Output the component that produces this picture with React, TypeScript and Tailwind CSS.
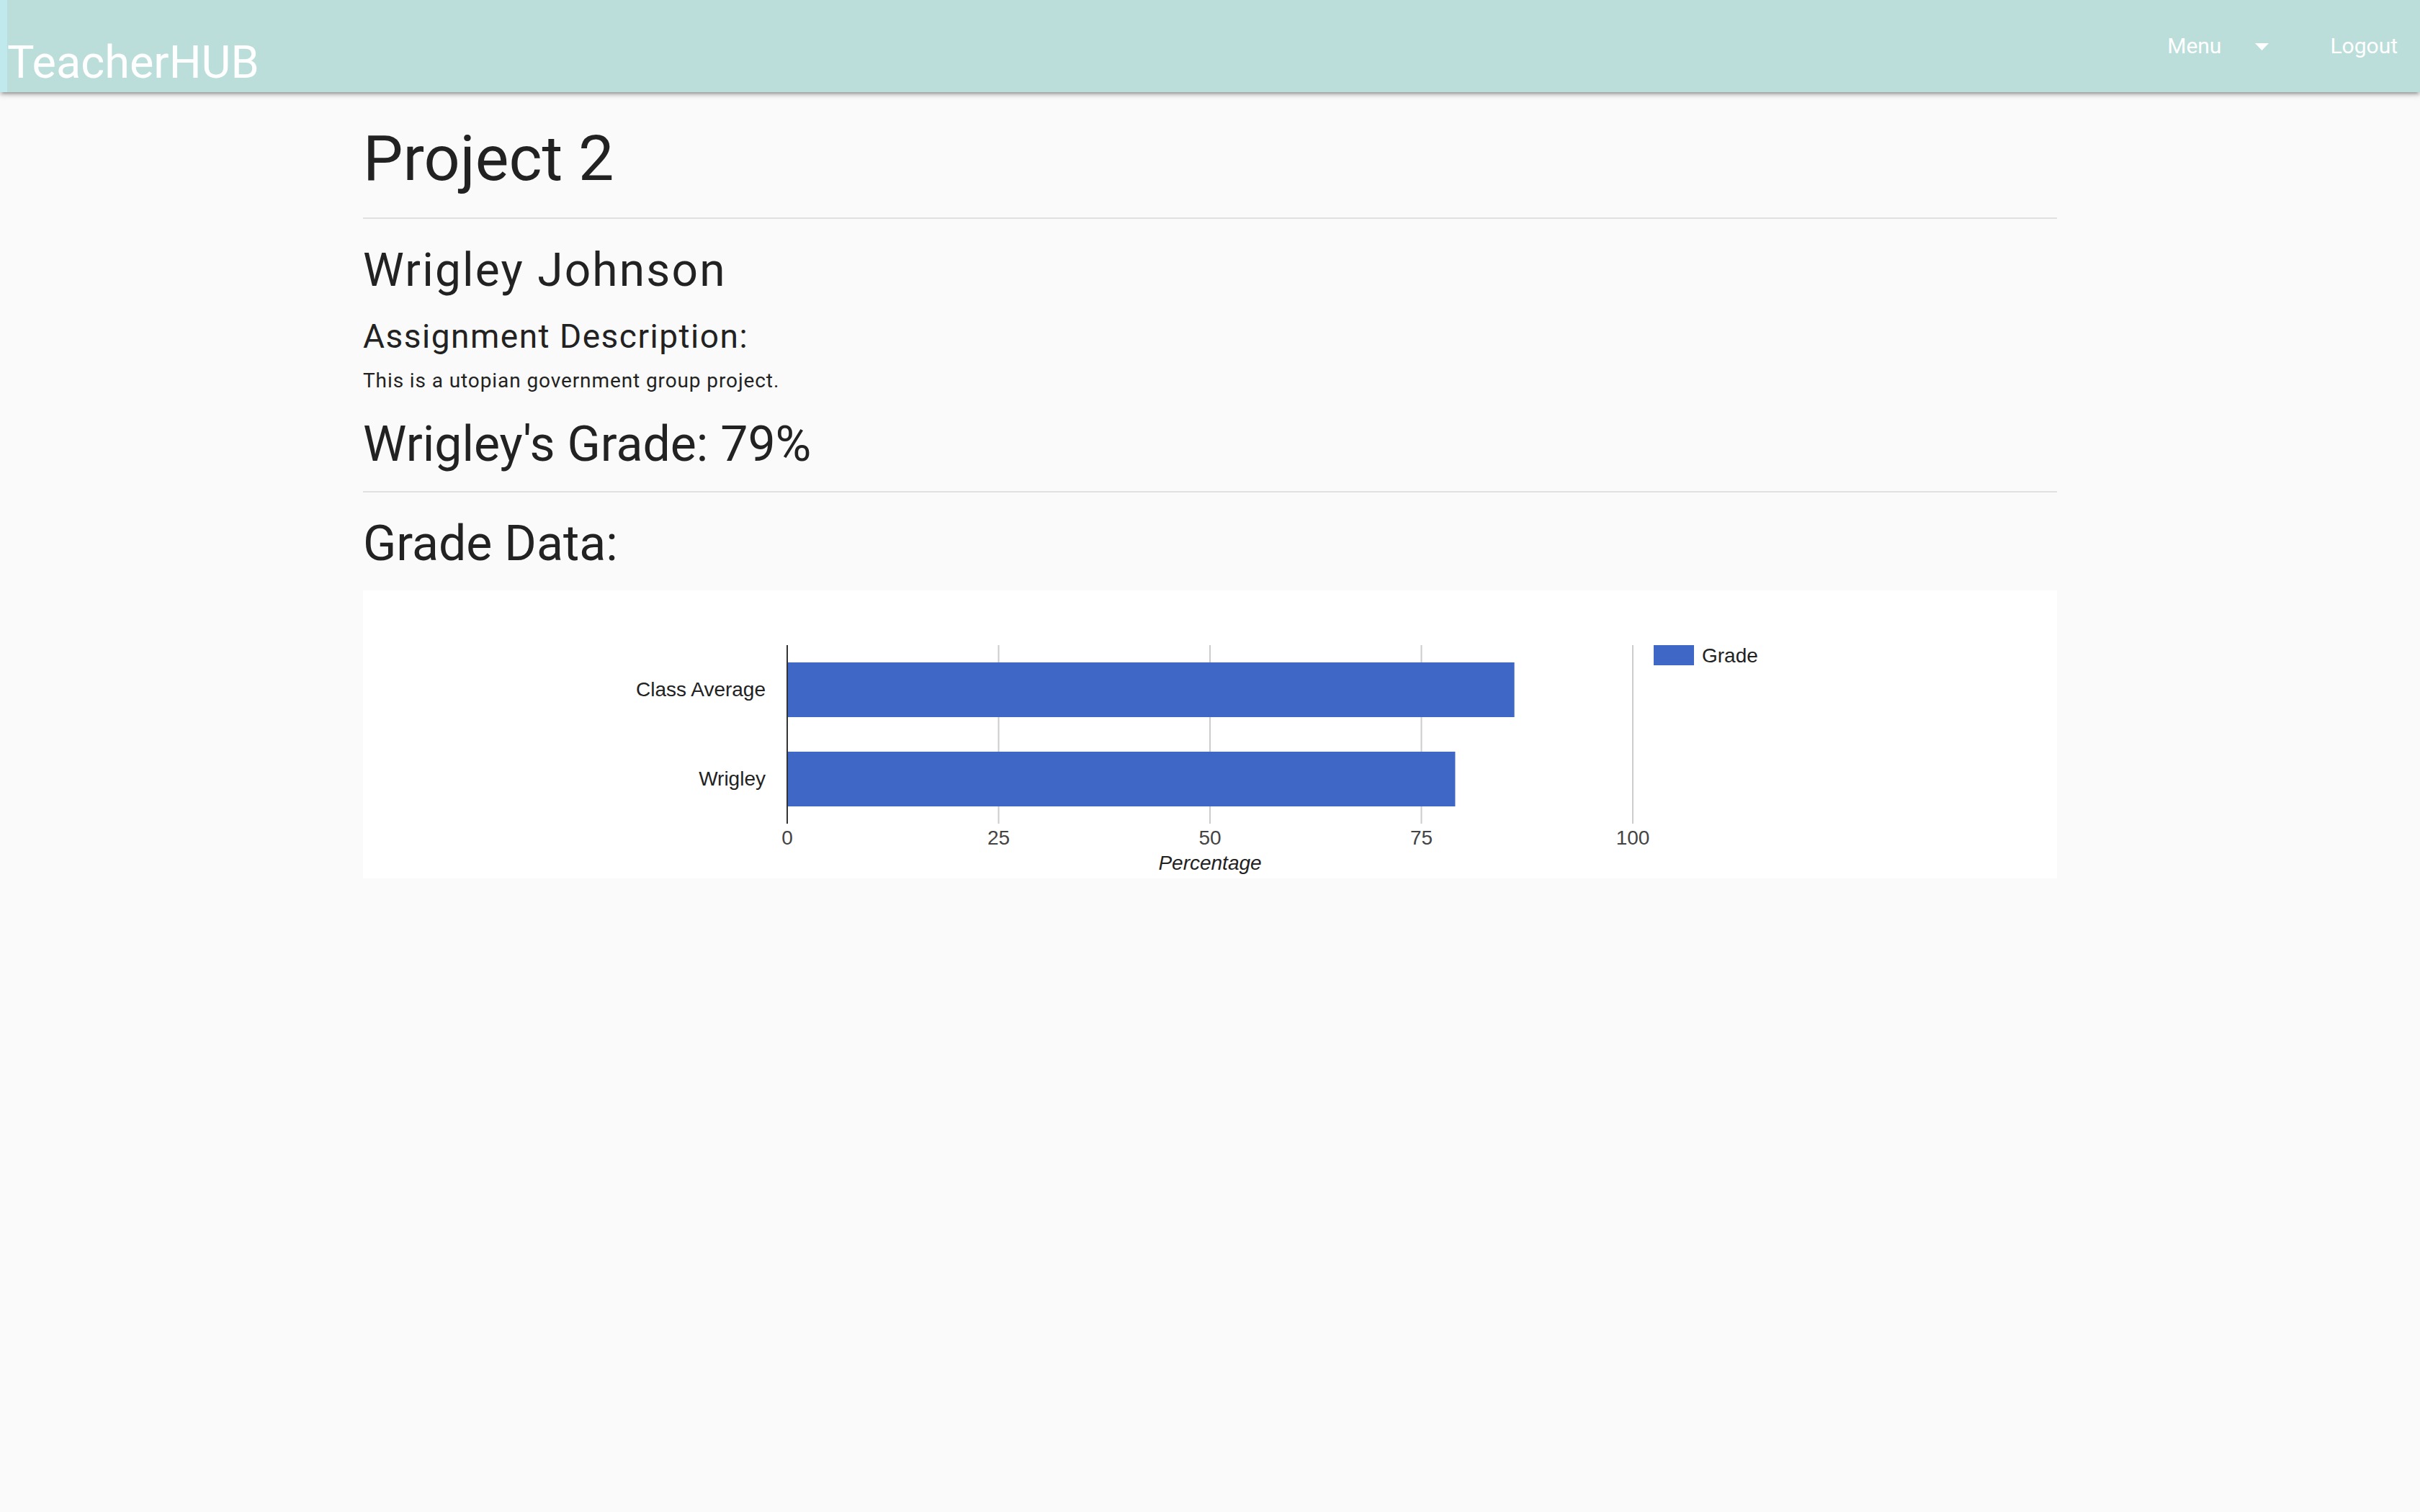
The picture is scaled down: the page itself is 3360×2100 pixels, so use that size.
import React from "react";

const UNIT = 11.74;
const X0 = 589;

function GradeChart() {
  const grid = [0, 25, 50, 75, 100];
  const bars = [
    { label: "Class Average", value: 86, y: 100 },
    { label: "Wrigley", value: 79, y: 224 },
  ];
  return (
    <svg width="2352" height="400" viewBox="0 0 2352 400" className="block">
      {grid.slice(1).map((g) => (
        <rect key={g} x={X0 + g * UNIT - 1} y={76} width={2} height={248} fill="#cccccc" />
      ))}
      {bars.map((b) => (
        <g key={b.label}>
          <rect x={X0} y={b.y} width={b.value * UNIT} height={76} fill="#3f68c6" />
          <text
            x={559}
            y={b.y + 47}
            textAnchor="end"
            fontFamily="'Liberation Sans', Arial, sans-serif"
            fontSize={28}
            fill="#222222"
          >
            {b.label}
          </text>
        </g>
      ))}
      <rect x={X0 - 1} y={76} width={2} height={248} fill="#333333" />
      {grid.map((g) => (
        <text
          key={g}
          x={X0 + g * UNIT}
          y={353}
          textAnchor="middle"
          fontFamily="'Liberation Sans', Arial, sans-serif"
          fontSize={28}
          fill="#444444"
        >
          {g}
        </text>
      ))}
      <text
        x={X0 + 50 * UNIT}
        y={388}
        textAnchor="middle"
        fontFamily="'Liberation Sans', Arial, sans-serif"
        fontSize={28}
        fontStyle="italic"
        fill="#222222"
      >
        Percentage
      </text>
      <rect x={1792} y={76} width={56} height={28} fill="#3f68c6" />
      <text
        x={1859}
        y={100}
        fontFamily="'Liberation Sans', Arial, sans-serif"
        fontSize={28}
        fill="#222222"
      >
        Grade
      </text>
    </svg>
  );
}

export default function App() {
  return (
    <div
      className="min-h-[2100px] bg-[#fafafa] text-[#222222]"
      style={{ fontFamily: "Roboto, 'Noto Sans', sans-serif" }}
    >
      <nav className="relative z-10 flex h-[128px] bg-[#bbdedb] shadow-[0_4px_4px_0_rgba(0,0,0,0.14),0_6px_2px_-4px_rgba(0,0,0,0.12),0_2px_10px_0_rgba(0,0,0,0.2)]">
        <div className="w-[10px] self-stretch bg-[#c0e9ee]" />
        <div className="pt-[55px] text-[63px] leading-none text-white">TeacherHUB</div>
        <div className="ml-auto flex items-center pr-[31px] text-[30px] leading-none text-white">
          <span>Menu</span>
          <svg width="19" height="10" viewBox="0 0 19 10" className="ml-[47px] mt-[2px]">
            <path d="M0 0 L19 0 L9.5 10 Z" fill="#ffffff" />
          </svg>
          <span className="ml-[85px]">Logout</span>
        </div>
      </nav>

      <main className="mx-auto w-[70%]">
        <h1 className="pt-[48px] text-[88px] leading-none">Project 2</h1>
        <div className="mt-[38px] h-[2px] bg-[#e0e0e0]" />
        <h2 className="mt-[40px] text-[64px] leading-none tracking-[2.2px]">Wrigley Johnson</h2>
        <h3 className="mt-[36px] text-[46px] leading-none tracking-[1.5px]">Assignment Description:</h3>
        <p className="mt-[25px] text-[28px] leading-none tracking-[0.9px]">
          This is a utopian government group project.
        </p>
        <h2 className="mt-[40px] text-[68px] leading-none">Wrigley's Grade: 79%</h2>
        <div className="mt-[31px] h-[2px] bg-[#e0e0e0]" />
        <h2 className="mt-[37px] text-[68px] leading-none">Grade Data:</h2>
        <div className="mt-[31px] bg-white">
          <GradeChart />
        </div>
      </main>
    </div>
  );
}
